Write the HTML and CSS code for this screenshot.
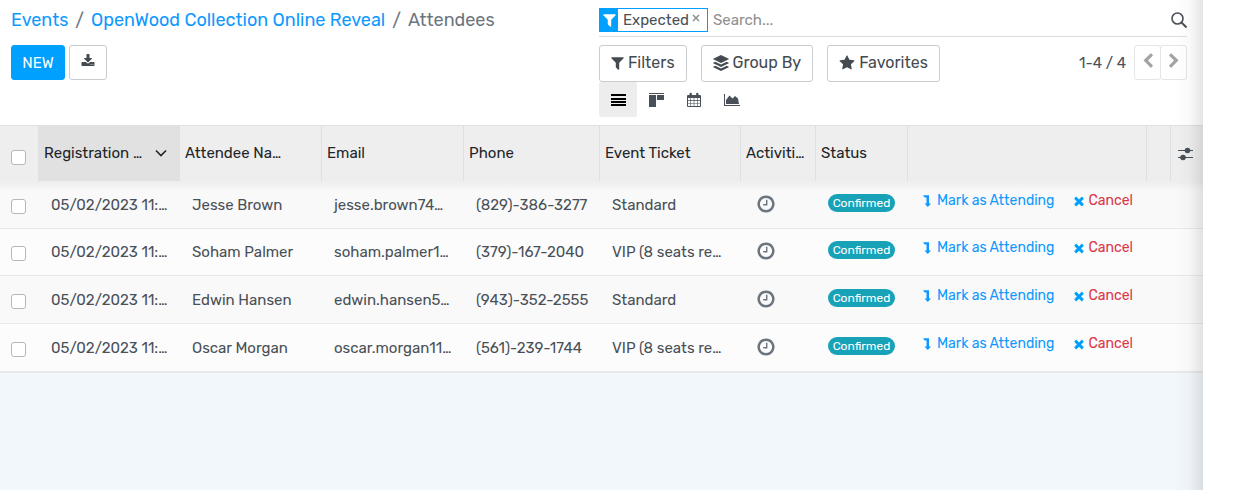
FILE: index.html
```
<!DOCTYPE html>
<html lang="en">
<head>
<meta charset="utf-8">
<title>Attendees</title>
<link rel="stylesheet" href="styles.css">
</head>
<body>
<svg class="sprite" aria-hidden="true">
  <symbol id="i-filter" viewBox="192 0 1408 1792"><path d="M1595 295q17 41-14 70l-493 493v742q0 42-39 59-13 5-25 5-27 0-45-19l-256-256q-19-19-19-45v-486l-493-493q-31-29-14-70 17-39 59-39h1280q42 0 59 39z"/></symbol>
  <symbol id="i-star" viewBox="0 0 1792 1792"><path d="M1728 647q0 22-26 48l-363 354 86 500q1 7 1 20 0 21-10.500 35.500t-30.500 14.500q-19 0-40-12l-449-236-449 236q-22 12-40 12-21 0-31.500-14.500t-10.500-35.500q0-6 2-20l86-500-364-354q-25-27-25-48 0-37 56-46l502-73 225-455q19-41 49-41t49 41l225 455 502 73q56 9 56 46z"/></symbol>
  <symbol id="i-download" viewBox="0 0 1792 1792"><path d="M1344 1344q0-26-19-45t-45-19-45 19-19 45 19 45 45 19 45-19 19-45zm256 0q0-26-19-45t-45-19-45 19-19 45 19 45 45 19 45-19 19-45zm128-224v320q0 40-28 68t-68 28h-1472q-40 0-68-28t-28-68v-320q0-40 28-68t68-28h465l135 136q58 56 136 56t136-56l136-136h464q40 0 68 28t28 68zm-325-569q17 41-14 70l-448 448q-18 19-45 19t-45-19l-448-448q-31-29-14-70 17-39 59-39h256v-448q0-26 19-45t45-19h256q26 0 45 19t19 45v448h256q42 0 59 39z"/></symbol>
  <symbol id="i-times" viewBox="0 0 1792 1792"><path d="M1490 1322q0 40-28 68l-136 136q-28 28-68 28t-68-28l-294-294-294 294q-28 28-68 28t-68-28l-136-136q-28-28-28-68t28-68l294-294-294-294q-28-28-28-68t28-68l136-136q28-28 68-28t68 28l294 294 294-294q28-28 68-28t68 28l136 136q28 28 28 68t-28 68l-294 294 294 294q28 28 28 68z"/></symbol>
  <symbol id="i-clock" viewBox="0 0 1792 1792"><path d="M1024 544v448q0 14-9 23t-23 9h-320q-14 0-23-9t-9-23v-64q0-14 9-23t23-9h224v-352q0-14 9-23t23-9h64q14 0 23 9t9 23zm416 352q0-148-73-273t-198-198-273-73-273 73-198 198-73 273 73 273 198 198 273 73 273-73 198-198 73-273zm224 0q0 209-103 385.500t-279.500 279.500-385.500 103-385.500-103-279.500-279.500-103-385.500 103-385.500 279.500-279.500 385.500-103 385.500 103 279.500 279.500 103 385.500z"/></symbol>
  <symbol id="i-prev" viewBox="0 0 1792 1792"><path d="M1427 301l-531 531 531 531q19 19 19 45t-19 45l-166 166q-19 19-45 19t-45-19l-742-742q-19-19-19-45t19-45l742-742q19-19 45-19t45 19l166 166q19 19 19 45t-19 45z"/></symbol>
  <symbol id="i-close" viewBox="0 0 8 8"><path d="m1 1 6 6M7 1 1 7" fill="none" stroke="currentColor" stroke-width="1.500"/></symbol>
  <symbol id="i-layers" viewBox="0 0 16 16"><path d="M8 0 .3 3.700a.3.300 0 0 0 0 .6L8 8l7.700-3.700a.3.300 0 0 0 0-.6zM.3 7.700l1.900-.9L8 9.600l5.800-2.800 1.900.9a.3.300 0 0 1 0 .6L8 12 .3 8.300a.3.300 0 0 1 0-.6zM.3 11.700l1.900-.9L8 13.600l5.800-2.800 1.900.9a.3.300 0 0 1 0 .6L8 16l-7.700-3.700a.3.300 0 0 1 0-.6z"/></symbol>
  <symbol id="i-list" viewBox="0 0 16 16"><path d="M1 2h15v2H1zM1 6h15v2H1zM1 9h15v2H1zM1 12h15v2H1z"/></symbol>
  <symbol id="i-kanban" viewBox="0 0 16 16"><path d="M1 1h15v1H1zM1 3h7v12H1zM9 3h7v5H9z"/></symbol>
  <symbol id="i-calendar" viewBox="0 0 16 16"><path fill-rule="evenodd" d="M2 3h1.500V2a1.200 1.200 0 0 1 2.400 0v1h4.200V2a1.200 1.200 0 0 1 2.400 0v1H14a1 1 0 0 1 1 1v10a1 1 0 0 1-1 1H2a1 1 0 0 1-1-1V4a1 1 0 0 1 1-1zm0 3v2.300h2.400V6zm3 0v2.300h2.700V6zm3.300 0v2.300H11V6zm3.300 0v2.300H14V6zM2 8.900v2.300h2.400V8.900zm3 0v2.300h2.700V8.900zm3.300 0v2.300H11V8.900zm3.300 0v2.300H14V8.900zM2 11.800V14h2.400v-2.200zm3 0V14h2.700v-2.200zm3.300 0V14H11v-2.200zm3.300 0V14H14v-2.200z"/></symbol>
  <symbol id="i-chart" viewBox="0 0 18 16"><path d="M1 2h1v11h15v1H1zM3 12V8l3.500-4.500L9.500 6.500 12 4l3 2.500L16 12z"/></symbol>
  <symbol id="i-search" viewBox="0 0 16 16"><g fill="none" stroke="currentColor" stroke-width="1.600"><circle cx="6.500" cy="6.500" r="5.500"/><path d="m10.500 10.500 5 5" stroke-width="2"/></g></symbol>
  <symbol id="i-down" viewBox="0 0 12 8"><path d="m1 1.500 5 5 5-5" fill="none" stroke="currentColor" stroke-width="1.600"/></symbol>
  <symbol id="i-sliders" viewBox="0 0 16 14"><path d="M1 3h15v1H1zM1 10h15v1H1z"/><circle cx="10.500" cy="3.500" r="2.800"/><circle cx="6" cy="10.500" r="2.800"/></symbol>
  <symbol id="i-level" viewBox="0 0 8 12"><path d="M0 .3h6v8.200h2L4.800 12 1.500 8.500h2V2.500H1.700z"/></symbol>
</svg>

<main class="panel">
  <header class="control">
    <nav class="crumbs" aria-label="Breadcrumb">
      <a href="#">Events</a><span>/</span><a href="#">OpenWood Collection Online Reveal</a><span>/</span><span>Attendees</span>
    </nav>
    <div class="search">
      <div class="facet">
        <span class="facet-icon"><svg class="icon-filter"><use href="#i-filter"/></svg></span>
        <span class="facet-label">Expected</span>
        <button class="facet-remove" aria-label="Remove Expected"><svg class="icon-mini"><use href="#i-close"/></svg></button>
      </div>
      <input class="search-input" type="text" placeholder="Search..." aria-label="Search">
      <button class="search-go" aria-label="Run search"><svg class="icon"><use href="#i-search"/></svg></button>
    </div>
    <div class="actions">
      <button class="btn primary">NEW</button>
      <button class="btn export" aria-label="Export"><svg class="icon-sm"><use href="#i-download"/></svg></button>
    </div>
    <div class="tools">
      <div class="tool-row">
        <button class="btn menu"><svg class="icon-filter"><use href="#i-filter"/></svg>Filters</button>
        <button class="btn menu"><svg class="icon"><use href="#i-layers"/></svg>Group By</button>
        <button class="btn menu"><svg class="icon"><use href="#i-star"/></svg>Favorites</button>
        <div class="pager">
          <span class="range">1-4 / 4</span>
          <button class="btn page" aria-label="Previous"><svg class="icon"><use href="#i-prev"/></svg></button>
          <button class="btn page next" aria-label="Next"><svg class="icon"><use href="#i-prev"/></svg></button>
        </div>
      </div>
      <div class="views">
        <button class="view active" aria-label="List"><svg class="icon"><use href="#i-list"/></svg></button>
        <button class="view" aria-label="Kanban"><svg class="icon"><use href="#i-kanban"/></svg></button>
        <button class="view" aria-label="Calendar"><svg class="icon"><use href="#i-calendar"/></svg></button>
        <button class="view" aria-label="Graph"><svg class="icon-wide"><use href="#i-chart"/></svg></button>
      </div>
    </div>
  </header>

  <table class="list">
    <colgroup>
      <col class="c-check"><col class="c-text"><col class="c-wide"><col class="c-wide"><col class="c-phone"><col class="c-text"><col class="c-act"><col class="c-status"><col><col class="c-gap"><col class="c-opt">
    </colgroup>
    <thead>
      <tr>
        <th class="check"><input type="checkbox" aria-label="Select all"></th>
        <th class="sorted"><div class="sort"><span>Registration …</span><svg class="icon-down"><use href="#i-down"/></svg></div></th>
        <th>Attendee Na…</th>
        <th>Email</th>
        <th>Phone</th>
        <th>Event Ticket</th>
        <th>Activiti…</th>
        <th>Status</th>
        <th></th>
        <th></th>
        <th class="opt"><button class="options" aria-label="Optional columns"><svg class="icon-opt"><use href="#i-sliders"/></svg></button></th>
      </tr>
    </thead>
    <tbody>
      <tr>
        <td class="check"><input type="checkbox" aria-label="Select Jesse Brown"></td>
        <td>05/02/2023 11:…</td><td>Jesse Brown</td><td>jesse.brown74…</td><td>(829)-386-3277</td><td>Standard</td>
        <td class="act"><button class="clock" aria-label="Activities"><svg class="icon-clock"><use href="#i-clock"/></svg></button></td>
        <td class="status"><span class="badge">Confirmed</span></td>
        <td class="row-actions" colspan="3"><div><button class="attend"><svg class="icon-level"><use href="#i-level"/></svg>Mark as Attending</button><button class="cancel"><svg class="icon-sm"><use href="#i-times"/></svg>Cancel</button></div></td>
      </tr>
      <tr>
        <td class="check"><input type="checkbox" aria-label="Select Soham Palmer"></td>
        <td>05/02/2023 11:…</td><td>Soham Palmer</td><td>soham.palmer1…</td><td>(379)-167-2040</td><td>VIP (8 seats re…</td>
        <td class="act"><button class="clock" aria-label="Activities"><svg class="icon-clock"><use href="#i-clock"/></svg></button></td>
        <td class="status"><span class="badge">Confirmed</span></td>
        <td class="row-actions" colspan="3"><div><button class="attend"><svg class="icon-level"><use href="#i-level"/></svg>Mark as Attending</button><button class="cancel"><svg class="icon-sm"><use href="#i-times"/></svg>Cancel</button></div></td>
      </tr>
      <tr>
        <td class="check"><input type="checkbox" aria-label="Select Edwin Hansen"></td>
        <td>05/02/2023 11:…</td><td>Edwin Hansen</td><td>edwin.hansen5…</td><td>(943)-352-2555</td><td>Standard</td>
        <td class="act"><button class="clock" aria-label="Activities"><svg class="icon-clock"><use href="#i-clock"/></svg></button></td>
        <td class="status"><span class="badge">Confirmed</span></td>
        <td class="row-actions" colspan="3"><div><button class="attend"><svg class="icon-level"><use href="#i-level"/></svg>Mark as Attending</button><button class="cancel"><svg class="icon-sm"><use href="#i-times"/></svg>Cancel</button></div></td>
      </tr>
      <tr>
        <td class="check"><input type="checkbox" aria-label="Select Oscar Morgan"></td>
        <td>05/02/2023 11:…</td><td>Oscar Morgan</td><td>oscar.morgan11…</td><td>(561)-239-1744</td><td>VIP (8 seats re…</td>
        <td class="act"><button class="clock" aria-label="Activities"><svg class="icon-clock"><use href="#i-clock"/></svg></button></td>
        <td class="status"><span class="badge">Confirmed</span></td>
        <td class="row-actions" colspan="3"><div><button class="attend"><svg class="icon-level"><use href="#i-level"/></svg>Mark as Attending</button><button class="cancel"><svg class="icon-sm"><use href="#i-times"/></svg>Cancel</button></div></td>
      </tr>
    </tbody>
  </table>
</main>
</body>
</html>
```
FILE: styles.css
```
* { box-sizing: border-box; }
body {
  margin: 0;
  padding-right: 52px;
  background: #fff;
  color: #495057;
  font: 15px/24px Rubik, Roboto, sans-serif;
}
button, input { font: inherit; color: inherit; }
button { display: inline-flex; align-items: center; padding: 0; border: 0; background: none; cursor: pointer; }
svg { flex: none; fill: currentColor; }
a { color: #0d99ff; text-decoration: none; }

.sprite { display: none; }
.icon { width: 16px; height: 16px; }
.icon-filter { width: 13px; height: 16px; }
.icon-sm { width: 14px; height: 14px; }
.icon-mini { width: 8px; height: 8px; }
.icon-wide { width: 18px; height: 16px; }
.icon-down { width: 12px; height: 8px; }
.icon-opt { width: 16px; height: 14px; }
.icon-clock { width: 20px; height: 20px; }
.icon-level { width: 8px; height: 12px; }

.panel { position: relative; min-height: 100vh; background: #f2f7fb; }
.panel::after {
  content: "";
  position: absolute;
  inset: 0 0 0 auto;
  width: 28px;
  background: linear-gradient(to right, rgba(0,0,0,0), rgba(0,0,0,.02) 50%, rgba(0,0,0,.1));
  pointer-events: none;
}

.control {
  display: grid;
  grid-template-columns: 1fr 1fr;
  row-gap: 8px;
  padding: 4px 16px 8px 11px;
  background: #fff;
}
.crumbs { display: flex; gap: 7px; padding-top: 4px; font-size: 18px; color: #6c757d; white-space: nowrap; }
.search { display: flex; align-items: center; height: 33px; padding-bottom: 1px; border-bottom: 1px solid #d8dde3; }
.facet { display: flex; align-items: center; height: 24px; border: 1px solid #00a0ff; }
.facet-icon { display: flex; align-items: center; justify-content: center; align-self: stretch; width: 18px; background: #00a0ff; color: #fff; }
.facet-label { padding-left: 5px; }
.facet-remove { padding: 0 7px 3px 3px; color: #8a8f94; }
.search-input { flex: 1; min-width: 0; padding: 0 5px; border: 0; outline: 0; background: none; }
.search-input::placeholder { color: #8f8f8f; opacity: 1; }

.actions { display: flex; align-items: flex-start; gap: 4px; }
.btn { justify-content: center; height: 35px; border: 1px solid #c9ccd0; border-radius: 3px; background: #fff; color: #444b50; }
.primary { width: 54px; border-color: #00a0ff; background: #00a0ff; color: #fff; }
.export { width: 38px; }
.export .icon-sm { margin-bottom: 4px; }
.tool-row { display: flex; align-items: flex-start; gap: 14px; }
.menu { height: 37px; gap: 4px; padding: 0 11px 2px; font-size: 16px; }
.pager { display: flex; align-items: center; margin-left: auto; }
.range { padding-right: 8px; }
.page { width: 27px; border-color: #e3e5e8; color: #a3a3a3; padding-bottom: 4px; }
.next { margin-left: -1px; }
.next svg { transform: scaleX(-1); }
.views { display: flex; }
.view { justify-content: center; width: 38px; height: 35px; }
.view.active { border-radius: 2px; background: #ededed; color: #000; }

.list { width: 100%; table-layout: fixed; border-collapse: separate; border-spacing: 0; }
.c-check { width: 38px; }
.c-wide { width: 142px; }
.c-text { width: 141px; }
.c-phone { width: 136px; }
.c-act { width: 75px; }
.c-status { width: 92px; }
.c-gap { width: 24px; }
.c-opt { width: 33px; }
.list th, .list td { overflow: hidden; text-overflow: ellipsis; white-space: nowrap; text-align: left; }
.list th {
  height: 56px;
  padding: 0 4px 1px 5px;
  border-top: 1px solid #dee0e4;
  border-left: 1px solid #dee0e4;
  background: #eee;
  color: #212529;
  font-weight: 400;
}
.list th:first-child { border-left: 0; }
.list .sorted { padding-right: 12px; background: #e1e1e1; }
.sort { display: flex; align-items: center; justify-content: space-between; }
.list td { height: 48px; padding: 0 5px 0 13px; border-bottom: 1px solid #e7e9ec; background: #f9f9f9; }
.list tr:nth-child(even) td { height: 47px; background: #fcfcfc; }
.list tr:last-child td { height: 49px; border-bottom-width: 2px; }
.list tbody tr:first-child td { background: linear-gradient(#ededed, #f9f9f9 10px); }
.list .check { padding: 3px 0 0 11px; text-overflow: clip; }
.list th.check { padding-top: 8px; }
.check input {
  display: block;
  appearance: none;
  width: 15px;
  height: 15px;
  margin: 0;
  border: 1px solid #b5b8bb;
  border-radius: 3px;
  background: #fff;
}
.list .opt { padding: 0 0 0 6px; }
.opt button { display: flex; color: #495057; }
.list .act { padding: 0 15px 2px 16px; }
.clock { display: flex; color: #6c757d; }
.list .status { padding: 0 0 4px 13px; }
.badge { display: block; width: 67px; border-radius: 9px; background: #17a2b8; color: #fff; font-size: 12px; line-height: 18px; text-align: center; }
.list .row-actions { padding: 0 0 8px 16px; font-size: 14px; }
.row-actions div { display: flex; gap: 18px; }
.attend { gap: 6px; color: #0d99ff; }
.cancel { gap: 2px; color: #dc3545; }
.cancel svg { color: #00a0ff; }
```
